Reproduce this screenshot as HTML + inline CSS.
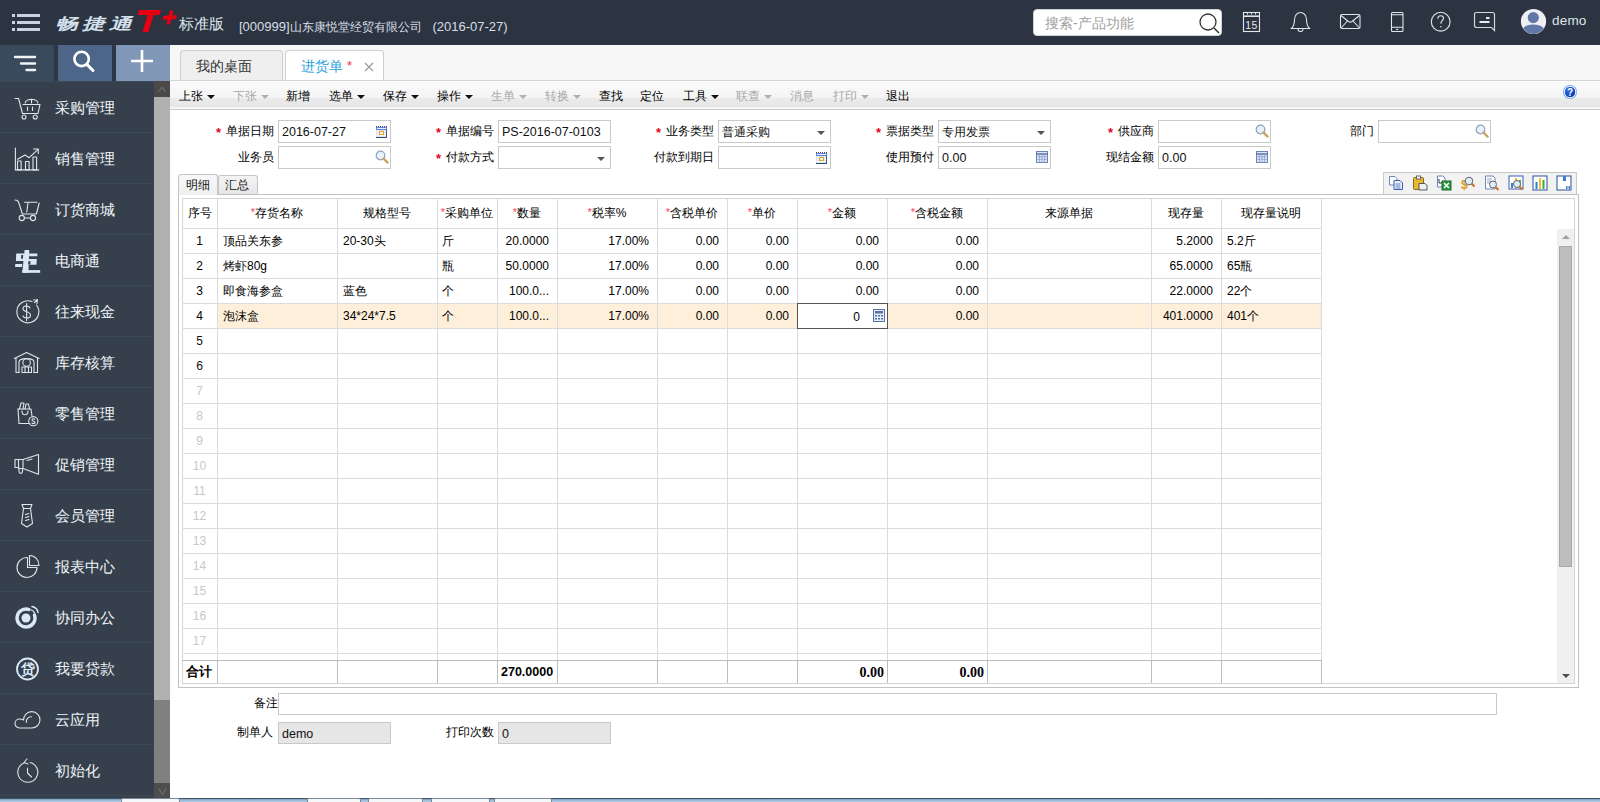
<!DOCTYPE html><html><head><meta charset="utf-8"><style>
*{box-sizing:border-box;margin:0;padding:0}
html,body{width:1600px;height:802px;overflow:hidden;background:#fff;font-family:"Liberation Sans",sans-serif;font-size:12px;color:#222}
.a{position:absolute;white-space:nowrap}
#hdr{position:absolute;left:0;top:0;width:1600px;height:45px;background:#2b3440}
.si{position:absolute;left:0;width:154px;height:51px;border-top:1px solid #3e4957}
.si span{position:absolute;left:55px;top:17px;font-size:15px;color:#f0f4f8;line-height:17px}
.si svg{position:absolute;left:10px;top:9px}
.tb{position:absolute;top:89px;font-size:12px;line-height:14px;color:#000}
.tb.d{color:#a8a8a8}
.car{position:absolute;top:95px;width:0;height:0;border-left:4px solid transparent;border-right:4px solid transparent;border-top:4px solid #111}
.car.d{border-top-color:#b0b0b0}
.lbl{position:absolute;font-size:12px;line-height:14px;color:#000}
.req{position:absolute;font-size:13px;line-height:13px;color:#e8001c;font-weight:bold}
.inp{position:absolute;background:#fff;border:1px solid #c9c9c9;height:23px}
.iv{position:absolute;font-size:12.5px;line-height:14px;color:#111}
.vl{position:absolute;width:1px;background:#dcdcdc}
.hl{position:absolute;height:1px;background:#dcdcdc}
.ct{position:absolute;font-size:12px;line-height:14px;color:#000}
.rn{position:absolute;font-size:12px;line-height:14px;color:#111;text-align:center;width:35px}
.rn.e{color:#c8c8c8}
</style></head><body>
<div id="hdr">
  <svg class="a" style="left:11px;top:13px" width="30" height="19" viewBox="0 0 30 19">
    <g fill="#c9d3e0"><rect x="1" y="1" width="3" height="3"/><rect x="6" y="1" width="23" height="3"/>
    <rect x="1" y="8" width="3" height="3"/><rect x="6" y="8" width="23" height="3"/>
    <rect x="1" y="15" width="3" height="3"/><rect x="6" y="15" width="23" height="3"/></g>
  </svg>
  <div class="a" style="left:55px;top:13px;font-size:21px;font-weight:bold;font-style:italic;color:#d4e0ec;letter-spacing:4px;line-height:22px;transform-origin:0 50%;transform:scale(1.08,0.74)">畅捷通</div>
  <svg class="a" style="left:136px;top:9px" width="42" height="24" viewBox="0 0 42 24">
    <path d="M3 1 L25 1 L23.5 6 L17.5 6 L12.5 23 L6.5 23 L11.5 6 L1.5 6 Z" fill="#e60012"/>
    <path d="M34 1.5 L37.5 1.5 L36.2 6.5 L41 6 L40.2 10 L35.2 10.5 L33.8 15.5 L30.3 15.5 L31.7 10.5 L26.5 11 L27.3 7 L32.5 6.5 Z" fill="#e60012"/>
  </svg>
  <div class="a" style="left:179px;top:15px;font-size:15px;color:#dfe6ee;line-height:18px">标准版</div>
  <div class="a" style="left:239px;top:19px;font-size:13px;color:#d8dee6;line-height:16px">[000999]<span style="font-size:12px">山东康悦堂经贸有限公司</span>&nbsp;&nbsp;&nbsp;(2016-07-27)</div>
  <div class="a" style="left:1033px;top:9px;width:189px;height:27px;background:#fff;border-radius:4px;border:1px solid #cfd4da"></div>
  <div class="a" style="left:1045px;top:15px;font-size:14px;color:#a0a0a0;line-height:17px">搜索-产品功能</div>
  <svg class="a" style="left:1198px;top:12px" width="24" height="22" viewBox="0 0 24 22"><circle cx="10" cy="10" r="8" fill="none" stroke="#333" stroke-width="1.3"/><path d="M16 16 L21 21" stroke="#333" stroke-width="1.5"/></svg>
  <svg class="a" style="left:1242px;top:11px" width="20" height="22" viewBox="0 0 20 22"><g fill="none" stroke="#e2e6ec" stroke-width="1.1"><rect x="1.5" y="1.5" width="16" height="19"/><path d="M5.5 1.5 V3.5 M9.5 1.5 V3.5 M13.5 1.5 V3.5"/><path d="M1.5 5.2 H17.5" stroke-width="1.6"/></g><text x="9.5" y="17.6" font-size="10.5" text-anchor="middle" fill="#e2e6ec" font-family="Liberation Sans" letter-spacing="0.5">15</text></svg>
  <svg class="a" style="left:1290px;top:11px" width="22" height="22" viewBox="0 0 22 22"><g fill="none" stroke="#e2e6ec" stroke-width="1.1"><path d="M1.5 17.5 C3.5 15.5 4.5 13 4.5 8.5 C4.5 4 7.5 1.5 10.5 1.5 C13.5 1.5 16.5 4 16.5 8.5 C16.5 13 17.5 15.5 19.5 17.5 Z"/><path d="M8 18 A2.5 2.5 0 0 0 13 18"/></g></svg>
  <svg class="a" style="left:1339px;top:13px" width="23" height="18" viewBox="0 0 23 18"><g fill="none" stroke="#e2e6ec" stroke-width="1.1"><rect x="1.5" y="1.5" width="19.5" height="14" rx="1.5"/><path d="M2 2.5 L9.5 8.5 Q11.25 9.8 13 8.5 L20.5 2.5"/><path d="M2 15 L8.5 8 M20.5 15 L14 8"/></g></svg>
  <svg class="a" style="left:1390px;top:11px" width="15" height="22" viewBox="0 0 15 22"><g fill="none" stroke="#e2e6ec" stroke-width="1.1"><rect x="1.5" y="1.5" width="11.5" height="19" rx="1"/><path d="M1.5 3.8 H13 M1.5 16.3 H13"/></g><rect x="6.2" y="17.8" width="2" height="1.2" fill="#e2e6ec"/></svg>
  <svg class="a" style="left:1430px;top:11px" width="22" height="22" viewBox="0 0 22 22"><circle cx="10.7" cy="10.7" r="9.4" fill="none" stroke="#e2e6ec" stroke-width="1.1"/><path d="M7.8 7.8 C7.8 5.6 9.2 4.8 10.7 4.8 C12.4 4.8 13.5 5.8 13.5 7.3 C13.5 9.3 10.9 9.8 10.9 12.8" fill="none" stroke="#e2e6ec" stroke-width="1.1"/><rect x="10.3" y="15" width="1.2" height="1.4" fill="#e2e6ec"/></svg>
  <svg class="a" style="left:1473px;top:11px" width="24" height="22" viewBox="0 0 24 22"><g fill="none" stroke="#cfd9e2" stroke-width="1.2"><path d="M3.5 1.5 H19.5 C20.8 1.5 21.5 2.2 21.5 3.5 V19.5 L18.5 16.5 H3.5 C2.2 16.5 1.5 15.8 1.5 14.5 V3.5 C1.5 2.2 2.2 1.5 3.5 1.5 Z"/></g><g stroke="#e6eaef" stroke-width="1.8"><path d="M13 7 H16.5 M6.5 11 H16.5"/></g></svg>
  <svg class="a" style="left:1520px;top:8px" width="27" height="27" viewBox="0 0 27 27"><defs><clipPath id="cav"><circle cx="13.5" cy="13.5" r="12.4"/></clipPath></defs><circle cx="13.5" cy="13.5" r="12.6" fill="#eef0f5"/><g clip-path="url(#cav)" fill="#6278a6"><circle cx="13.3" cy="9.6" r="5.6"/><path d="M1 27 C1 19.5 6 16.5 13.3 16.5 C20.5 16.5 26 19.5 26 27 Z"/></g></svg>
  <div class="a" style="left:1552px;top:13px;font-size:13.5px;color:#dfe6ee;line-height:16px;letter-spacing:0.2px">demo</div>
</div>
<div class="a" style="left:0;top:45px;width:170px;height:753px;background:#36404d"></div>
<div class="a" style="left:0;top:45px;width:54px;height:36px;background:#3a4a5d"></div>
<div class="a" style="left:54px;top:45px;width:4px;height:36px;background:#2e3844"></div>
<div class="a" style="left:58px;top:45px;width:54px;height:36px;background:#4c6589"></div>
<div class="a" style="left:112px;top:45px;width:4px;height:36px;background:#2e3844"></div>
<div class="a" style="left:116px;top:45px;width:54px;height:36px;background:#8197b7"></div>
<svg class="a" style="left:12px;top:53px" width="26" height="22" viewBox="0 0 26 22"><g stroke="#f0f2f5" stroke-width="2.4" stroke-linecap="round"><path d="M3 4 H23 M9 10.5 H23 M14.5 17 H23"/></g></svg>
<svg class="a" style="left:71px;top:50px" width="28" height="28" viewBox="0 0 28 28"><circle cx="10.6" cy="8.9" r="7.2" fill="none" stroke="#fff" stroke-width="2.6"/><path d="M15.8 14.4 L22 20.5" stroke="#fff" stroke-width="3" stroke-linecap="round"/></svg>
<svg class="a" style="left:128px;top:48px" width="28" height="26" viewBox="0 0 28 26"><path d="M14 2 V24 M3 13 H25" stroke="#fff" stroke-width="2.6"/></svg>
<div class="a" style="left:154px;top:81px;width:16px;height:717px;background:#b0b0b0"></div>
<div class="a" style="left:154px;top:81px;width:16px;height:16px;background:#4a4947"></div>
<svg class="a" style="left:154px;top:81px" width="16" height="16"><path d="M4.5 10.5 L8 6.5 L11.5 10.5" fill="none" stroke="#6a6a6a" stroke-width="1.2"/></svg>
<div class="a" style="left:154px;top:700px;width:16px;height:98px;background:#808080"></div>
<div class="a" style="left:154px;top:783px;width:16px;height:15px;background:#4d4d4d"></div>
<svg class="a" style="left:154px;top:783px" width="16" height="15"><path d="M5 5.5 L8.5 12 L12 5.5" fill="none" stroke="#6e6e6e" stroke-width="1.1"/></svg>
<div class="si" style="top:81px"><svg width="36" height="36" viewBox="0 0 36 36"><g fill="none" stroke="#dfe5ec" stroke-width="1.1" stroke-linecap="round" stroke-linejoin="round"><path d="M5 7.5 H8.5 L12.5 22.5 H28 L30 13.5 H13"/><path d="M17.5 16 V19.5 M22.5 16 V19.5"/><circle cx="14" cy="26" r="2"/><circle cx="25.2" cy="26" r="2"/><path d="M15.2 12 C15.2 9.5 18.5 8.5 21.5 8.2 C24.5 8.5 27.8 9 27.8 12"/><path d="M21.5 8.5 V12"/></g></svg><span>采购管理</span></div>
<div class="si" style="top:132px"><svg width="36" height="36" viewBox="0 0 36 36"><g fill="none" stroke="#dfe5ec" stroke-width="1.1" stroke-linecap="round" stroke-linejoin="round"><path d="M5.4 6 V27.9 H28.8"/><rect x="7.5" y="19" width="3.6" height="8.9"/><rect x="15.5" y="19.5" width="3.6" height="8.4"/><rect x="23" y="15" width="3.6" height="12.9"/><path d="M7.5 17.3 L15 13 L19.2 15.7 L28 7.3"/><path d="M23.5 7 H28.3 V11.5"/></g></svg><span>销售管理</span></div>
<div class="si" style="top:183px"><svg width="36" height="36" viewBox="0 0 36 36"><g fill="none" stroke="#dfe5ec" stroke-width="1.1" stroke-linecap="round" stroke-linejoin="round"><path d="M5 7 C6.5 7 8 7.5 8.5 9 L12.4 21 H26.4 L29.2 10"/><path d="M14.6 9.2 H27"/><path d="M16.8 19 L18 9.8"/><circle cx="11.8" cy="25" r="2.6"/><circle cx="23" cy="25" r="2.6"/><path d="M14.5 25 H20.3"/></g></svg><span>订货商城</span></div>
<div class="si" style="top:234px"><svg width="36" height="36" viewBox="0 0 36 36"><g fill="#dbe9f7"><path d="M14.6 6 H19.3 L18.4 28.8 H12.3 Z"/><path d="M6.2 9.4 H14.6 L14.3 17 H5.9 Z"/><path d="M5.3 20 H12.2 L12.1 23.1 H5.1 Z"/><path d="M19.2 9.4 H27.4 L27.3 12.3 H19.1 Z"/><path d="M19 15 H26.8 L26.5 20.8 H18.7 Z"/><path d="M12.3 26.1 H30.2 L30.2 28.8 H12.3 Z"/></g><g fill="#36404d"><path d="M11.3 10.9 H13.2 L12.9 14.8 H11 Z"/><path d="M18.4 17.3 H20.6 L20.3 20.6 H18.2 Z"/></g></svg><span>电商通</span></div>
<div class="si" style="top:285px"><svg width="36" height="36" viewBox="0 0 36 36"><g fill="none" stroke="#dfe5ec" stroke-width="1.1" stroke-linecap="round" stroke-linejoin="round"><path d="M26.5 10 A11 11 0 1 1 22 6.6"/><path d="M23.5 5 L27.5 4.5 L27 8.5 M27.5 4.5 L24.5 7.5"/><path d="M20 13 C19.5 11.5 18 11 16.6 11 C14.5 11 13 12 13 13.8 C13 17.5 20.5 16 20.5 20.2 C20.5 22 19 23 16.6 23 C15 23 13.5 22.3 13 21"/><path d="M16.6 8.5 V25.5"/></g></svg><span>往来现金</span></div>
<div class="si" style="top:336px"><svg width="36" height="36" viewBox="0 0 36 36"><g fill="none" stroke="#dfe5ec" stroke-width="1.1" stroke-linecap="round" stroke-linejoin="round"><path d="M4.4 12.5 L16.6 6.5 L29 12.5"/><path d="M6 12 V26.5 H9 M27.5 12 V26.5 H24"/><path d="M9 26.5 V16 C9 11.5 24 11.5 24 16 V26.5"/><circle cx="16.6" cy="16.5" r="3.8"/><path d="M12 21 H21.5 V26.5 H12 Z M15 21 V26.5 M18.5 21 V26.5"/></g></svg><span>库存核算</span></div>
<div class="si" style="top:387px"><svg width="36" height="36" viewBox="0 0 36 36"><g fill="none" stroke="#dfe5ec" stroke-width="1.1" stroke-linecap="round" stroke-linejoin="round"><path d="M8 12 L9 26.5 H20"/><path d="M8 12 H21 L22 19"/><path d="M9.5 12 L11 6 L14 6 L13 12 M15 12 L16 7 L18.5 7 L19.5 12"/><path d="M12 14 C12 19 18 19 18 14"/><circle cx="23.3" cy="24.2" r="4.6"/><path d="M24.8 22.3 C24.5 21.5 22 21.3 22 23 C22 24.5 25 24 25 25.6 C25 27 22.4 26.9 21.9 26"/></g></svg><span>零售管理</span></div>
<div class="si" style="top:438px"><svg width="36" height="36" viewBox="0 0 36 36"><g fill="none" stroke="#dfe5ec" stroke-width="1.1" stroke-linecap="round" stroke-linejoin="round"><rect x="5" y="11.5" width="3.5" height="8"/><path d="M8.5 11.5 H13 L28.5 6.5 V26.3 L13 20.5 H8.5"/><path d="M13 11.5 V20.5"/><path d="M9 20 V23.5 C9 26 12.5 26 12.5 23.5 V20.5"/><path d="M17 12.5 L22 11"/></g></svg><span>促销管理</span></div>
<div class="si" style="top:489px"><svg width="36" height="36" viewBox="0 0 36 36"><g fill="none" stroke="#dfe5ec" stroke-width="1.1" stroke-linecap="round" stroke-linejoin="round"><path d="M12 5.5 H22 L20.5 9.5 H13.5 Z"/><path d="M13.5 9.5 L11.5 24.5 L17 28 L22.5 24.5 L20.5 9.5"/><path d="M15.5 15.5 L19 14.5 M15.5 18.5 L19 17.5 M15.5 21.5 L19 20.5"/></g></svg><span>会员管理</span></div>
<div class="si" style="top:540px"><svg width="36" height="36" viewBox="0 0 36 36"><g fill="none" stroke="#dfe5ec" stroke-width="1.1" stroke-linecap="round" stroke-linejoin="round"><path d="M17.5 7.5 A10 10 0 1 0 27 17.5 H17.5 Z" /><path d="M19.5 5.5 V15.5 H29 C29 10 25 5.5 19.5 5.5 Z"/></g></svg><span>报表中心</span></div>
<div class="si" style="top:591px"><svg width="36" height="36" viewBox="0 0 36 36"><g fill="none" stroke="#dbe9f7" stroke-linecap="round"><path d="M24.5 14 A9 9 0 1 1 19 8.5" stroke-width="3.4"/><path d="M22 5.5 C25 6 27.5 8.5 28 11.5" stroke-width="1.5"/><path d="M21.5 9 C23 9.5 24 10.5 24.5 12" stroke-width="1.3"/></g><circle cx="16" cy="17" r="4.5" fill="#dbe9f7"/></svg><span>协同办公</span></div>
<div class="si" style="top:642px"><svg width="36" height="36" viewBox="0 0 36 36"><circle cx="17.5" cy="17" r="10.5" fill="none" stroke="#dbe9f7" stroke-width="1.8"/><text x="17.5" y="22.2" font-size="14" font-weight="bold" text-anchor="middle" fill="#dbe9f7">贷</text></svg><span>我要贷款</span></div>
<div class="si" style="top:693px"><svg width="36" height="36" viewBox="0 0 36 36"><g fill="none" stroke="#dfe5ec" stroke-width="1.1" stroke-linecap="round" stroke-linejoin="round"><path d="M9.5 25 A4.5 4.5 0 0 1 9.5 16 C11 16 12.5 16.5 13.6 17 A8.2 8.2 0 1 1 21.5 25 Z"/><path d="M16.3 19.5 A5 5 0 0 1 21.5 13.8"/></g></svg><span>云应用</span></div>
<div class="si" style="top:744px"><svg width="36" height="36" viewBox="0 0 36 36"><g fill="none" stroke="#dfe5ec" stroke-width="1.1" stroke-linecap="round" stroke-linejoin="round"><path d="M14 9 A10 10 0 1 0 20 8.5"/><path d="M17 5 L14 8.5 L18 10"/><path d="M17.5 14 V19 L21.5 23"/></g></svg><span>初始化</span></div>
<div class="a" style="left:0;top:795px;width:154px;height:1px;background:#3e4957"></div>
<div class="a" style="left:170px;top:45px;width:1430px;height:35px;background:#f7f7f7"></div>
<div class="a" style="left:180px;top:50px;width:103px;height:31px;background:#efefef;border:1px solid #cfcfcf;border-bottom:none;border-radius:4px 4px 0 0"></div>
<div class="a" style="left:196px;top:58px;font-size:14px;line-height:16px;color:#333">我的桌面</div>
<div class="a" style="left:285px;top:50px;width:99px;height:31px;background:#fff;border:1px solid #cfcfcf;border-bottom:none;border-radius:4px 4px 0 0"></div>
<div class="a" style="left:301px;top:58px;font-size:14px;line-height:16px;color:#2d9fe0">进货单</div>
<div class="a" style="left:347px;top:59px;font-size:13px;line-height:13px;color:#e33">*</div>
<svg class="a" style="left:363px;top:61px" width="12" height="12"><path d="M2 2 L10 10 M10 2 L2 10" stroke="#999" stroke-width="1.2"/></svg>
<div class="a" style="left:170px;top:80px;width:1430px;height:30px;background:linear-gradient(#fafafa 0,#f5f5f5 58%,#ebebeb 62%,#e6e6e6 92%,#fafafa 96%);border-top:1px solid #d5d5d5;border-bottom:1px solid #c8c8c8"></div>
<div class="tb" style="left:179px">上张</div>
<div class="car" style="left:207px"></div>
<div class="tb d" style="left:233px">下张</div>
<div class="car d" style="left:261px"></div>
<div class="tb" style="left:286px">新增</div>
<div class="tb" style="left:329px">选单</div>
<div class="car" style="left:357px"></div>
<div class="tb" style="left:383px">保存</div>
<div class="car" style="left:411px"></div>
<div class="tb" style="left:437px">操作</div>
<div class="car" style="left:465px"></div>
<div class="tb d" style="left:491px">生单</div>
<div class="car d" style="left:519px"></div>
<div class="tb d" style="left:545px">转换</div>
<div class="car d" style="left:573px"></div>
<div class="tb" style="left:599px">查找</div>
<div class="tb" style="left:640px">定位</div>
<div class="tb" style="left:683px">工具</div>
<div class="car" style="left:711px"></div>
<div class="tb d" style="left:736px">联查</div>
<div class="car d" style="left:764px"></div>
<div class="tb d" style="left:790px">消息</div>
<div class="tb d" style="left:833px">打印</div>
<div class="car d" style="left:861px"></div>
<div class="tb" style="left:886px">退出</div>
<svg class="a" style="left:1562px;top:84px" width="16" height="16" viewBox="0 0 16 16"><defs><linearGradient id="hg" x1="0" y1="0" x2="1" y2="1"><stop offset="0" stop-color="#3a78f0"/><stop offset="1" stop-color="#0030a8"/></linearGradient></defs><circle cx="8" cy="8" r="7" fill="#6a9be8"/><circle cx="8" cy="8" r="5.8" fill="url(#hg)" stroke="#fff" stroke-width="1"/><text x="8" y="11.8" font-size="10" font-weight="bold" text-anchor="middle" fill="#fff" font-family="Liberation Sans">?</text></svg>
<div class="req" style="left:216px;top:126px">*</div>
<div class="lbl" style="left:226px;top:124px">单据日期</div>
<div class="inp" style="left:278px;top:120px;width:113px;height:23px;background:#fff"></div>
<div class="iv" style="left:282px;top:125px;font-size:12.5px">2016-07-27</div>
<svg class="a" style="left:376px;top:126px" width="12" height="13" viewBox="0 0 12 13"><rect x="0" y="1" width="11" height="11" fill="#dde3f0"/><rect x="0" y="1" width="11" height="3" fill="#5a86e0"/><rect x="1" y="2" width="9" height="1" fill="#e8f0ff"/><g fill="#ffffff"><rect x="1" y="5" width="2" height="1"/><rect x="4" y="5" width="3" height="1"/><rect x="8" y="5" width="2" height="1"/><rect x="1" y="7" width="2" height="1"/><rect x="8" y="7" width="2" height="1"/><rect x="1" y="9" width="2" height="1"/><rect x="4" y="9" width="3" height="1"/><rect x="8" y="9" width="2" height="1"/></g><rect x="3.5" y="5.5" width="4" height="3" rx="0.8" fill="#fff" stroke="#e0a020" stroke-width="1.2"/><rect x="0" y="11" width="11" height="1" fill="#2a4a70"/><rect x="10" y="4" width="1" height="8" fill="#3a5a80"/><g fill="#604040"><rect x="0" y="0" width="1" height="1"/><rect x="2" y="0" width="1" height="1"/><rect x="4" y="0" width="1" height="1"/><rect x="6" y="0" width="1" height="1"/><rect x="8" y="0" width="1" height="1"/><rect x="10" y="0" width="1" height="1"/></g></svg>
<div class="lbl" style="left:238px;top:150px">业务员</div>
<div class="inp" style="left:278px;top:146px;width:113px;height:23px;background:#fff"></div>
<svg class="a" style="left:375px;top:150px" width="14" height="14" viewBox="0 0 14 14"><circle cx="5.5" cy="5.5" r="4.3" fill="#e8f2fb" stroke="#8ca3b8" stroke-width="1.2"/><path d="M8.5 8.5 L12.5 12.5" stroke="#c8a060" stroke-width="2.4" stroke-linecap="round"/></svg>
<div class="req" style="left:436px;top:126px">*</div>
<div class="lbl" style="left:446px;top:124px">单据编号</div>
<div class="inp" style="left:498px;top:120px;width:113px;height:23px;background:#fff"></div>
<div class="iv" style="left:502px;top:125px;font-size:12.5px">PS-2016-07-0103</div>
<div class="req" style="left:436px;top:152px">*</div>
<div class="lbl" style="left:446px;top:150px">付款方式</div>
<div class="inp" style="left:498px;top:146px;width:113px;height:23px;background:#fff"></div>
<div class="a" style="left:597px;top:157px;width:0;height:0;border-left:4px solid transparent;border-right:4px solid transparent;border-top:4px solid #555"></div>
<div class="req" style="left:656px;top:126px">*</div>
<div class="lbl" style="left:666px;top:124px">业务类型</div>
<div class="inp" style="left:718px;top:120px;width:113px;height:23px;background:#fff"></div>
<div class="iv" style="left:722px;top:125px;font-size:12px">普通采购</div>
<div class="a" style="left:817px;top:131px;width:0;height:0;border-left:4px solid transparent;border-right:4px solid transparent;border-top:4px solid #555"></div>
<div class="lbl" style="left:654px;top:150px">付款到期日</div>
<div class="inp" style="left:718px;top:146px;width:113px;height:23px;background:#fff"></div>
<svg class="a" style="left:816px;top:152px" width="12" height="13" viewBox="0 0 12 13"><rect x="0" y="1" width="11" height="11" fill="#dde3f0"/><rect x="0" y="1" width="11" height="3" fill="#5a86e0"/><rect x="1" y="2" width="9" height="1" fill="#e8f0ff"/><g fill="#ffffff"><rect x="1" y="5" width="2" height="1"/><rect x="4" y="5" width="3" height="1"/><rect x="8" y="5" width="2" height="1"/><rect x="1" y="7" width="2" height="1"/><rect x="8" y="7" width="2" height="1"/><rect x="1" y="9" width="2" height="1"/><rect x="4" y="9" width="3" height="1"/><rect x="8" y="9" width="2" height="1"/></g><rect x="3.5" y="5.5" width="4" height="3" rx="0.8" fill="#fff" stroke="#e0a020" stroke-width="1.2"/><rect x="0" y="11" width="11" height="1" fill="#2a4a70"/><rect x="10" y="4" width="1" height="8" fill="#3a5a80"/><g fill="#604040"><rect x="0" y="0" width="1" height="1"/><rect x="2" y="0" width="1" height="1"/><rect x="4" y="0" width="1" height="1"/><rect x="6" y="0" width="1" height="1"/><rect x="8" y="0" width="1" height="1"/><rect x="10" y="0" width="1" height="1"/></g></svg>
<div class="req" style="left:876px;top:126px">*</div>
<div class="lbl" style="left:886px;top:124px">票据类型</div>
<div class="inp" style="left:938px;top:120px;width:113px;height:23px;background:#fff"></div>
<div class="iv" style="left:942px;top:125px;font-size:12px">专用发票</div>
<div class="a" style="left:1037px;top:131px;width:0;height:0;border-left:4px solid transparent;border-right:4px solid transparent;border-top:4px solid #555"></div>
<div class="lbl" style="left:886px;top:150px">使用预付</div>
<div class="inp" style="left:938px;top:146px;width:113px;height:23px;background:#fff"></div>
<div class="iv" style="left:942px;top:151px;font-size:12.5px">0.00</div>
<svg class="a" style="left:1036px;top:151px" width="12" height="12" viewBox="0 0 12 12"><rect x="0.5" y="0.5" width="11" height="11" fill="#dfe8f5" stroke="#6b83b8"/><path d="M0.5 3 H11.5" stroke="#5a73b0" stroke-width="1.5"/><g stroke="#8aa0cc" stroke-width="0.8"><path d="M3.5 3 V11.5 M6 3 V11.5 M8.5 3 V11.5 M0.5 5.7 H11.5 M0.5 8.3 H11.5"/></g></svg>
<div class="req" style="left:1108px;top:126px">*</div>
<div class="lbl" style="left:1118px;top:124px">供应商</div>
<div class="inp" style="left:1158px;top:120px;width:113px;height:23px;background:#fff"></div>
<svg class="a" style="left:1255px;top:124px" width="14" height="14" viewBox="0 0 14 14"><circle cx="5.5" cy="5.5" r="4.3" fill="#e8f2fb" stroke="#8ca3b8" stroke-width="1.2"/><path d="M8.5 8.5 L12.5 12.5" stroke="#c8a060" stroke-width="2.4" stroke-linecap="round"/></svg>
<div class="lbl" style="left:1106px;top:150px">现结金额</div>
<div class="inp" style="left:1158px;top:146px;width:113px;height:23px;background:#fff"></div>
<div class="iv" style="left:1162px;top:151px;font-size:12.5px">0.00</div>
<svg class="a" style="left:1256px;top:151px" width="12" height="12" viewBox="0 0 12 12"><rect x="0.5" y="0.5" width="11" height="11" fill="#dfe8f5" stroke="#6b83b8"/><path d="M0.5 3 H11.5" stroke="#5a73b0" stroke-width="1.5"/><g stroke="#8aa0cc" stroke-width="0.8"><path d="M3.5 3 V11.5 M6 3 V11.5 M8.5 3 V11.5 M0.5 5.7 H11.5 M0.5 8.3 H11.5"/></g></svg>
<div class="lbl" style="left:1350px;top:124px">部门</div>
<div class="inp" style="left:1378px;top:120px;width:113px;height:23px;background:#fff"></div>
<svg class="a" style="left:1475px;top:124px" width="14" height="14" viewBox="0 0 14 14"><circle cx="5.5" cy="5.5" r="4.3" fill="#e8f2fb" stroke="#8ca3b8" stroke-width="1.2"/><path d="M8.5 8.5 L12.5 12.5" stroke="#c8a060" stroke-width="2.4" stroke-linecap="round"/></svg>
<div class="a" style="left:178px;top:174px;width:40px;height:21px;background:linear-gradient(#f8f8f8,#f0f0f0);border:1px solid #c6c6c6;border-bottom:none;border-radius:3px 3px 0 0"></div>
<div class="a" style="left:186px;top:178px;font-size:12px;line-height:14px;color:#111">明细</div>
<div class="a" style="left:218px;top:175px;width:40px;height:20px;background:linear-gradient(#f4f4f4,#ececec 60%,#e2e2e2);border:1px solid #c6c6c6;border-bottom:none;border-radius:3px 3px 0 0"></div>
<div class="a" style="left:225px;top:178px;font-size:12px;line-height:14px;color:#111">汇总</div>
<div class="a" style="left:1383px;top:172px;width:194px;height:22px;background:#f2f2f2;border:1px solid #c8c8c8;border-bottom:none"></div>
<svg class="a" style="left:1388px;top:175px" width="16" height="16" viewBox="0 0 16 16"><path d="M1.5 1.5 H7 L9 3.5 V10 H1.5 Z" fill="#fff" stroke="#6a86c0"/><path d="M6 5.5 H12 L14.5 8 V14.5 H6 Z" fill="#eef3fb" stroke="#3a5fb0"/><path d="M7.5 9 H12.5 M7.5 11 H12.5 M7.5 13 H12.5" stroke="#5a7cc0"/></svg>
<svg class="a" style="left:1412px;top:175px" width="16" height="16" viewBox="0 0 16 16"><rect x="1.5" y="2.5" width="10" height="12" rx="1" fill="#e8b830" stroke="#8a6a20"/><rect x="4.5" y="1" width="4" height="3" fill="#fff" stroke="#666"/><path d="M7 8.5 H13 L15 10.5 V15 H7 Z" fill="#eef0f5" stroke="#555"/></svg>
<svg class="a" style="left:1436px;top:175px" width="16" height="16" viewBox="0 0 16 16"><path d="M1.5 1 H7 L9 3 V12 H1.5 Z" fill="#fff" stroke="#6a86c0"/><rect x="6" y="6" width="9" height="9" fill="#2a9a40" stroke="#1a6a28"/><path d="M8 8 L13 13 M13 8 L8 13" stroke="#fff" stroke-width="1.5"/><path d="M3 4 V8 H6" stroke="#333" fill="none"/></svg>
<svg class="a" style="left:1460px;top:175px" width="16" height="16" viewBox="0 0 16 16"><text x="1" y="14" font-size="12" font-weight="bold" fill="#d89a20" font-family="Liberation Sans">$</text><circle cx="9" cy="6" r="3.8" fill="#dceefa" stroke="#666"/><path d="M11.5 8.5 L14.5 11.5" stroke="#c87830" stroke-width="2.4"/></svg>
<svg class="a" style="left:1484px;top:175px" width="16" height="16" viewBox="0 0 16 16"><path d="M1.5 1 H9 L11 3 V14 H1.5 Z" fill="#fff" stroke="#6a86c0"/><path d="M3 4 H8 M3 6 H7 M3 8 H6" stroke="#9ab"/><circle cx="9" cy="9.5" r="3.5" fill="#dceefa" stroke="#666"/><path d="M11.5 12 L14.5 15" stroke="#c87830" stroke-width="2.4"/></svg>
<svg class="a" style="left:1508px;top:175px" width="16" height="16" viewBox="0 0 16 16"><rect x="1" y="1" width="14" height="13" fill="#fff" stroke="#3a5fb0"/><rect x="3" y="8" width="2" height="5" fill="#3a7fd0"/><rect x="7" y="3" width="2" height="10" fill="#e8b830"/><rect x="11" y="5" width="2" height="8" fill="#50b050"/><circle cx="9" cy="9" r="3.5" fill="#dceefa" stroke="#666"/><path d="M11.5 11.5 L14 14.5" stroke="#c87830" stroke-width="2.4"/></svg>
<svg class="a" style="left:1532px;top:175px" width="16" height="16" viewBox="0 0 16 16"><rect x="1" y="1" width="14" height="14" fill="#fff" stroke="#2a4f9a"/><rect x="3.5" y="7" width="2" height="7" fill="#2a80d0"/><rect x="7" y="3" width="2" height="11" fill="#f0c020"/><rect x="10.5" y="5" width="2" height="9" fill="#40a840"/></svg>
<svg class="a" style="left:1556px;top:175px" width="16" height="16" viewBox="0 0 16 16"><rect x="1" y="1" width="14" height="14" fill="#fff" stroke="#2a4f9a"/><rect x="7" y="1" width="3" height="5" fill="#3a80d0"/><rect x="10" y="11" width="1.5" height="3" fill="#3a80d0"/><rect x="12.5" y="11" width="1.5" height="3" fill="#3a80d0"/></svg>
<div class="a" style="left:178px;top:194px;width:1401px;height:494px;border:1px solid #c2c2c2;border-radius:0 0 0 0;background:#fff"></div>
<div class="a" style="left:179px;top:194px;width:38px;height:1px;background:#f0f0f0"></div>
<div class="a" style="left:182px;top:198px;width:1393px;height:486px;border:1px solid #d4d4d4;background:#fff"></div>
<div class="a" style="left:217px;top:304px;width:1104px;height:24px;background:#fdefd9"></div>
<div class="vl" style="left:217px;top:198px;height:462px"></div>
<div class="vl" style="left:217px;top:660px;height:24px;background:#bdbdbd"></div>
<div class="vl" style="left:337px;top:198px;height:462px"></div>
<div class="vl" style="left:337px;top:660px;height:24px;background:#bdbdbd"></div>
<div class="vl" style="left:437px;top:198px;height:462px"></div>
<div class="vl" style="left:437px;top:660px;height:24px;background:#bdbdbd"></div>
<div class="vl" style="left:497px;top:198px;height:462px"></div>
<div class="vl" style="left:497px;top:660px;height:24px;background:#bdbdbd"></div>
<div class="vl" style="left:557px;top:198px;height:462px"></div>
<div class="vl" style="left:557px;top:660px;height:24px;background:#bdbdbd"></div>
<div class="vl" style="left:657px;top:198px;height:462px"></div>
<div class="vl" style="left:657px;top:660px;height:24px;background:#bdbdbd"></div>
<div class="vl" style="left:727px;top:198px;height:462px"></div>
<div class="vl" style="left:727px;top:660px;height:24px;background:#bdbdbd"></div>
<div class="vl" style="left:797px;top:198px;height:462px"></div>
<div class="vl" style="left:797px;top:660px;height:24px;background:#bdbdbd"></div>
<div class="vl" style="left:887px;top:198px;height:462px"></div>
<div class="vl" style="left:887px;top:660px;height:24px;background:#bdbdbd"></div>
<div class="vl" style="left:987px;top:198px;height:462px"></div>
<div class="vl" style="left:987px;top:660px;height:24px;background:#bdbdbd"></div>
<div class="vl" style="left:1151px;top:198px;height:462px"></div>
<div class="vl" style="left:1151px;top:660px;height:24px;background:#bdbdbd"></div>
<div class="vl" style="left:1221px;top:198px;height:462px"></div>
<div class="vl" style="left:1221px;top:660px;height:24px;background:#bdbdbd"></div>
<div class="vl" style="left:1321px;top:198px;height:462px"></div>
<div class="vl" style="left:1321px;top:660px;height:24px;background:#bdbdbd"></div>
<div class="hl" style="left:182px;top:228px;width:1139px"></div>
<div class="hl" style="left:182px;top:253px;width:1139px"></div>
<div class="hl" style="left:182px;top:278px;width:1139px"></div>
<div class="hl" style="left:182px;top:303px;width:1139px"></div>
<div class="hl" style="left:182px;top:328px;width:1139px"></div>
<div class="hl" style="left:182px;top:353px;width:1139px"></div>
<div class="hl" style="left:182px;top:378px;width:1139px"></div>
<div class="hl" style="left:182px;top:403px;width:1139px"></div>
<div class="hl" style="left:182px;top:428px;width:1139px"></div>
<div class="hl" style="left:182px;top:453px;width:1139px"></div>
<div class="hl" style="left:182px;top:478px;width:1139px"></div>
<div class="hl" style="left:182px;top:503px;width:1139px"></div>
<div class="hl" style="left:182px;top:528px;width:1139px"></div>
<div class="hl" style="left:182px;top:553px;width:1139px"></div>
<div class="hl" style="left:182px;top:578px;width:1139px"></div>
<div class="hl" style="left:182px;top:603px;width:1139px"></div>
<div class="hl" style="left:182px;top:628px;width:1139px"></div>
<div class="hl" style="left:182px;top:653px;width:1139px"></div>
<div class="hl" style="left:182px;top:660px;width:1139px;background:#bdbdbd"></div>
<div class="hl" style="left:182px;top:683px;width:1139px;background:#cfcfcf"></div>
<div class="ct" style="left:182px;top:206px;width:35px;text-align:center">序号</div>
<div class="ct" style="left:217px;top:206px;width:120px;text-align:center"><span style="color:#ff3c5a;font-size:11px;display:inline-block;line-height:10px;vertical-align:top;margin-top:1px">*</span>存货名称</div>
<div class="ct" style="left:337px;top:206px;width:100px;text-align:center">规格型号</div>
<div class="ct" style="left:437px;top:206px;width:60px;text-align:center"><span style="color:#ff3c5a;font-size:11px;display:inline-block;line-height:10px;vertical-align:top;margin-top:1px">*</span>采购单位</div>
<div class="ct" style="left:497px;top:206px;width:60px;text-align:center"><span style="color:#ff3c5a;font-size:11px;display:inline-block;line-height:10px;vertical-align:top;margin-top:1px">*</span>数量</div>
<div class="ct" style="left:557px;top:206px;width:100px;text-align:center"><span style="color:#ff3c5a;font-size:11px;display:inline-block;line-height:10px;vertical-align:top;margin-top:1px">*</span>税率%</div>
<div class="ct" style="left:657px;top:206px;width:70px;text-align:center"><span style="color:#ff3c5a;font-size:11px;display:inline-block;line-height:10px;vertical-align:top;margin-top:1px">*</span>含税单价</div>
<div class="ct" style="left:727px;top:206px;width:70px;text-align:center"><span style="color:#ff3c5a;font-size:11px;display:inline-block;line-height:10px;vertical-align:top;margin-top:1px">*</span>单价</div>
<div class="ct" style="left:797px;top:206px;width:90px;text-align:center"><span style="color:#ff3c5a;font-size:11px;display:inline-block;line-height:10px;vertical-align:top;margin-top:1px">*</span>金额</div>
<div class="ct" style="left:887px;top:206px;width:100px;text-align:center"><span style="color:#ff3c5a;font-size:11px;display:inline-block;line-height:10px;vertical-align:top;margin-top:1px">*</span>含税金额</div>
<div class="ct" style="left:987px;top:206px;width:164px;text-align:center">来源单据</div>
<div class="ct" style="left:1151px;top:206px;width:70px;text-align:center">现存量</div>
<div class="ct" style="left:1221px;top:206px;width:100px;text-align:center">现存量说明</div>
<div class="ct" style="left:182px;top:234px;width:35px;text-align:center">1</div>
<div class="ct" style="left:223px;top:234px">顶品关东参</div>
<div class="ct" style="left:343px;top:234px">20-30头</div>
<div class="ct" style="left:442px;top:234px">斤</div>
<div class="ct" style="left:497px;top:234px;width:52px;text-align:right">20.0000</div>
<div class="ct" style="left:557px;top:234px;width:92px;text-align:right">17.00%</div>
<div class="ct" style="left:657px;top:234px;width:62px;text-align:right">0.00</div>
<div class="ct" style="left:727px;top:234px;width:62px;text-align:right">0.00</div>
<div class="ct" style="left:797px;top:234px;width:82px;text-align:right">0.00</div>
<div class="ct" style="left:887px;top:234px;width:92px;text-align:right">0.00</div>
<div class="ct" style="left:1151px;top:234px;width:62px;text-align:right">5.2000</div>
<div class="ct" style="left:1227px;top:234px">5.2斤</div>
<div class="ct" style="left:182px;top:259px;width:35px;text-align:center">2</div>
<div class="ct" style="left:223px;top:259px">烤虾80g</div>
<div class="ct" style="left:442px;top:259px">瓶</div>
<div class="ct" style="left:497px;top:259px;width:52px;text-align:right">50.0000</div>
<div class="ct" style="left:557px;top:259px;width:92px;text-align:right">17.00%</div>
<div class="ct" style="left:657px;top:259px;width:62px;text-align:right">0.00</div>
<div class="ct" style="left:727px;top:259px;width:62px;text-align:right">0.00</div>
<div class="ct" style="left:797px;top:259px;width:82px;text-align:right">0.00</div>
<div class="ct" style="left:887px;top:259px;width:92px;text-align:right">0.00</div>
<div class="ct" style="left:1151px;top:259px;width:62px;text-align:right">65.0000</div>
<div class="ct" style="left:1227px;top:259px">65瓶</div>
<div class="ct" style="left:182px;top:284px;width:35px;text-align:center">3</div>
<div class="ct" style="left:223px;top:284px">即食海参盒</div>
<div class="ct" style="left:343px;top:284px">蓝色</div>
<div class="ct" style="left:442px;top:284px">个</div>
<div class="ct" style="left:497px;top:284px;width:52px;text-align:right">100.0...</div>
<div class="ct" style="left:557px;top:284px;width:92px;text-align:right">17.00%</div>
<div class="ct" style="left:657px;top:284px;width:62px;text-align:right">0.00</div>
<div class="ct" style="left:727px;top:284px;width:62px;text-align:right">0.00</div>
<div class="ct" style="left:797px;top:284px;width:82px;text-align:right">0.00</div>
<div class="ct" style="left:887px;top:284px;width:92px;text-align:right">0.00</div>
<div class="ct" style="left:1151px;top:284px;width:62px;text-align:right">22.0000</div>
<div class="ct" style="left:1227px;top:284px">22个</div>
<div class="ct" style="left:182px;top:309px;width:35px;text-align:center">4</div>
<div class="ct" style="left:223px;top:309px">泡沫盒</div>
<div class="ct" style="left:343px;top:309px">34*24*7.5</div>
<div class="ct" style="left:442px;top:309px">个</div>
<div class="ct" style="left:497px;top:309px;width:52px;text-align:right">100.0...</div>
<div class="ct" style="left:557px;top:309px;width:92px;text-align:right">17.00%</div>
<div class="ct" style="left:657px;top:309px;width:62px;text-align:right">0.00</div>
<div class="ct" style="left:727px;top:309px;width:62px;text-align:right">0.00</div>
<div class="ct" style="left:887px;top:309px;width:92px;text-align:right">0.00</div>
<div class="ct" style="left:1151px;top:309px;width:62px;text-align:right">401.0000</div>
<div class="ct" style="left:1227px;top:309px">401个</div>
<div class="a" style="left:797px;top:303px;width:91px;height:26px;border:1px solid #555;background:#fff"></div>
<div class="ct" style="left:797px;top:310px;width:63px;text-align:right">0</div>
<svg class="a" style="left:873px;top:309px" width="12" height="13" viewBox="0 0 12 13"><rect x="0.5" y="0.5" width="11" height="12" fill="#e4ecf8" stroke="#5a72a8"/><rect x="2" y="2" width="8" height="2.5" fill="#5a72a8"/><g fill="#5a72a8"><rect x="2" y="6" width="2" height="1.5"/><rect x="5" y="6" width="2" height="1.5"/><rect x="8" y="6" width="2" height="1.5"/><rect x="2" y="9" width="2" height="1.5"/><rect x="5" y="9" width="2" height="1.5"/><rect x="8" y="9" width="2" height="1.5"/></g></svg>
<div class="rn" style="left:182px;top:334px">5</div>
<div class="rn" style="left:182px;top:359px">6</div>
<div class="rn e" style="left:182px;top:384px">7</div>
<div class="rn e" style="left:182px;top:409px">8</div>
<div class="rn e" style="left:182px;top:434px">9</div>
<div class="rn e" style="left:182px;top:459px">10</div>
<div class="rn e" style="left:182px;top:484px">11</div>
<div class="rn e" style="left:182px;top:509px">12</div>
<div class="rn e" style="left:182px;top:534px">13</div>
<div class="rn e" style="left:182px;top:559px">14</div>
<div class="rn e" style="left:182px;top:584px">15</div>
<div class="rn e" style="left:182px;top:609px">16</div>
<div class="rn e" style="left:182px;top:634px">17</div>
<div class="ct" style="left:186px;top:665px;font-weight:bold;font-size:13px">合计</div>
<div class="ct" style="left:501px;top:665px;font-weight:bold;font-size:12.5px">270.0000</div>
<div class="ct" style="left:797px;top:666px;width:87px;text-align:right;font-weight:bold;font-size:14px;font-family:'Liberation Serif',serif">0.00</div>
<div class="ct" style="left:887px;top:666px;width:97px;text-align:right;font-weight:bold;font-size:14px;font-family:'Liberation Serif',serif">0.00</div>
<div class="a" style="left:1557px;top:229px;width:17px;height:454px;background:#f0f0f0"></div>
<div class="a" style="left:1559px;top:246px;width:13px;height:321px;background:#bdbdbd;border:1px solid #a9a9a9"></div>
<div class="a" style="left:1562px;top:235px;width:0;height:0;border-left:4px solid transparent;border-right:4px solid transparent;border-bottom:4px solid #a0a0a0"></div>
<div class="a" style="left:1562px;top:674px;width:0;height:0;border-left:4px solid transparent;border-right:4px solid transparent;border-top:4px solid #505050"></div>
<div class="lbl" style="left:254px;top:696px">备注</div>
<div class="inp" style="left:278px;top:693px;width:1219px;height:22px"></div>
<div class="lbl" style="left:237px;top:725px">制单人</div>
<div class="inp" style="left:278px;top:722px;width:113px;height:22px;background:#e6e6e6"></div>
<div class="iv" style="left:282px;top:727px">demo</div>
<div class="lbl" style="left:446px;top:725px">打印次数</div>
<div class="inp" style="left:498px;top:722px;width:113px;height:22px;background:#e6e6e6"></div>
<div class="iv" style="left:502px;top:727px">0</div>
<div class="a" style="left:0;top:798px;width:1600px;height:4px;background:linear-gradient(#1e2a36,#8fb0cc 40%,#b0d0ea)"></div>
<div class="a" style="left:121px;top:798px;width:59px;height:4px;background:#f4f6f8;border:1px solid #7a8a9a;border-bottom:none;border-radius:2px 2px 0 0"></div>
<div class="a" style="left:307px;top:798px;width:54px;height:4px;background:#f4f6f8;border:1px solid #7a8a9a;border-bottom:none;border-radius:2px 2px 0 0"></div>
<div class="a" style="left:368px;top:798px;width:55px;height:4px;background:#f4f6f8;border:1px solid #7a8a9a;border-bottom:none;border-radius:2px 2px 0 0"></div>
<div class="a" style="left:431px;top:798px;width:59px;height:4px;background:#f4f6f8;border:1px solid #7a8a9a;border-bottom:none;border-radius:2px 2px 0 0"></div>
<div class="a" style="left:494px;top:798px;width:58px;height:4px;background:#f4f6f8;border:1px solid #7a8a9a;border-bottom:none;border-radius:2px 2px 0 0"></div>
</body></html>
